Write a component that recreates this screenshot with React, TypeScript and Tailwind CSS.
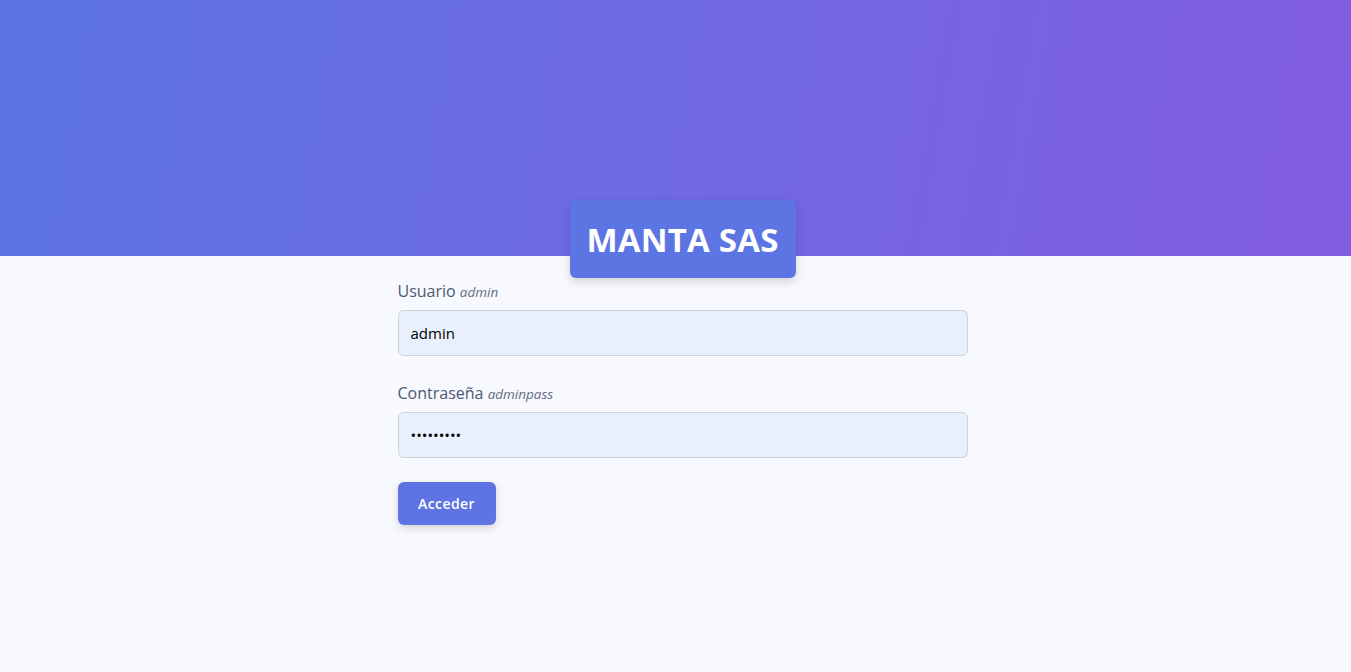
import React from "react";

export default function App() {
  return (
    <div
      className="min-h-[672px] bg-[#f7f9fe] flex flex-col"
      style={{ fontFamily: '"Open Sans", sans-serif' }}
    >
      <div className="h-[256px] bg-[linear-gradient(100deg,#5a73e4_0%,#6e6ae5_45%,#825be3_100%)] flex items-end justify-center pl-[14px]">
        <div className="translate-y-[22px] bg-[#5d74e3] rounded-[6px] h-[78px] w-[226px] flex items-center justify-center shadow-[0_4px_10px_rgba(0,0,0,0.15)]">
          <span className="text-white font-bold text-[33px] tracking-[0.2px] leading-none">MANTA SAS</span>
        </div>
      </div>
      <div className="pl-[14px]">
        <div className="w-[570px] mx-auto pt-[25px]">
          <label className="block text-[16px] text-[#4a5874] leading-[20px]">
            Usuario <span className="italic text-[13.5px] text-[#5f6b84]">admin</span>
          </label>
          <input
            defaultValue="admin"
            className="mt-[8px] w-full h-[46px] bg-[#e8f0fe] border border-[#cdd3dc] rounded-[6px] px-[12px] text-[15px] text-black outline-none"
          />
          <label className="block mt-[27px] text-[16px] text-[#4a5874] leading-[20px]">
            Contraseña <span className="italic text-[13.5px] text-[#5f6b84]">adminpass</span>
          </label>
          <input
            type="password"
            defaultValue="adminpass"
            className="mt-[8px] w-full h-[46px] bg-[#e8f0fe] border border-[#cdd3dc] rounded-[6px] px-[12px] text-[15px] text-black outline-none"
          />
          <button className="block mt-[24px] w-[98px] h-[43px] bg-[#5e74e4] text-white text-[14px] font-semibold rounded-[6px] shadow-[0_3px_8px_rgba(0,0,0,0.15)] tracking-[0.4px]">
            Acceder
          </button>
        </div>
      </div>
    </div>
  );
}
